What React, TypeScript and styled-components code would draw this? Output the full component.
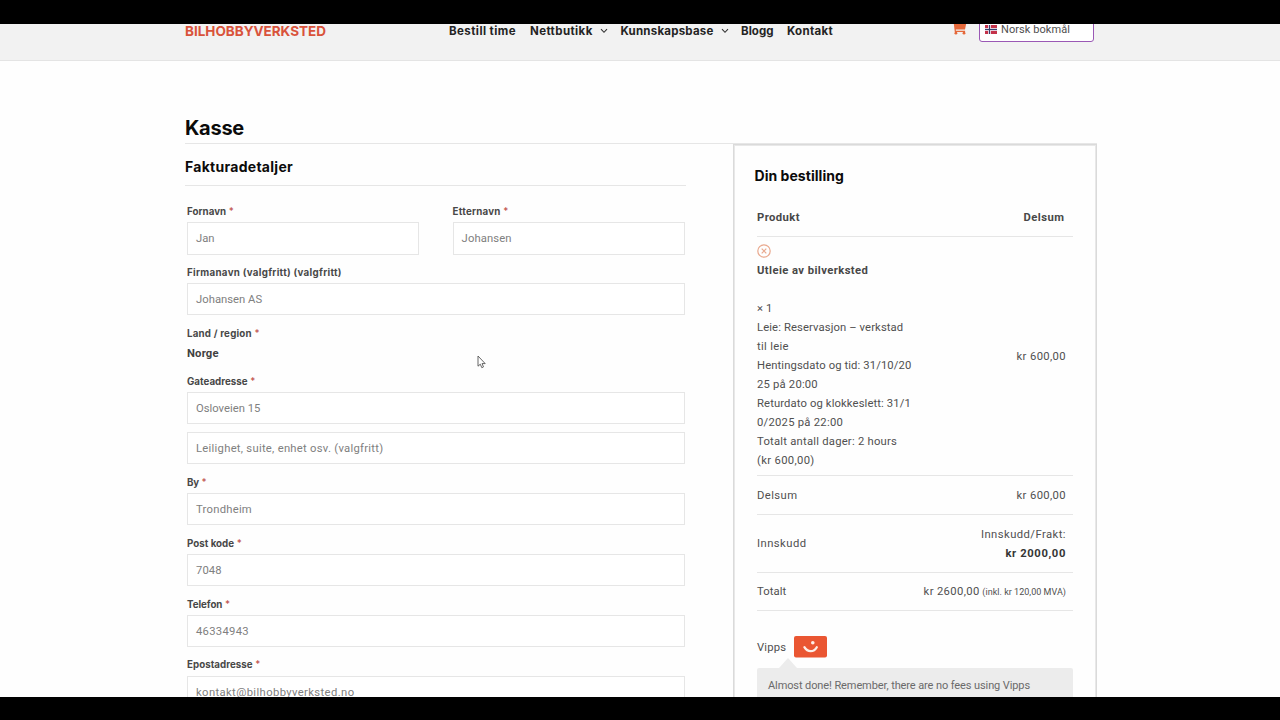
import React from "react";
import styled, { createGlobalStyle } from "styled-components";

const GlobalStyle = createGlobalStyle`
  * { box-sizing: border-box; }
  body { margin: 0; background: #000; }
`;

const body = `Roboto, "Liberation Sans", sans-serif`;
const display = `Inter, "Liberation Sans", sans-serif`;

const Frame = styled.div`
  width: 1280px;
  height: 720px;
  padding: 24px 0 23px;
  background: #000;
  overflow: hidden;
`;

const Page = styled.div`
  height: 673px;
  overflow: hidden;
  background: #fefefe;
  color: #505050;
  font: 400 11.25px/19px ${body};
`;

const Header = styled.header`
  height: 61px;
  margin-top: -24px;
  padding: 0 186px 0 185px;
  display: flex;
  align-items: center;
  background: #f2f2f2;
  border-bottom: 1px solid #e4e4e4;
`;

const Text = styled.span<{ $ls?: number }>`
  letter-spacing: ${(p) => p.$ls ?? 0.3}px;
  white-space: nowrap;
`;

const Logo = styled(Text)`
  width: 264px;
  padding-top: 1px;
  color: #d9533b;
  font-family: ${display};
  font-size: 13.5px;
  font-weight: 700;
  line-height: 12px;
`;

const Nav = styled.nav`
  flex: 1;
  display: flex;
  align-items: center;
  padding-top: 1px;
`;

const NavItem = styled.a<{ $w: number }>`
  width: ${(p) => p.$w}px;
  display: flex;
  align-items: center;
  gap: 7px;
  color: #242424;
  font-family: ${display};
  font-size: 11.5px;
  font-weight: 700;
  line-height: 14px;
`;

const Cart = styled.span`
  width: 27px;
  height: 14px;
  margin-top: -4px;
`;

const Language = styled.div`
  width: 115px;
  height: 27px;
  margin-top: -3px;
  padding: 2px 0 0 5px;
  display: flex;
  align-items: center;
  gap: 4px;
  background: #fff;
  border: 1px solid #9a58b5;
  border-radius: 3px;
  font-size: 11px;
  line-height: 12px;
`;

const Title = styled.h1`
  height: 83px;
  margin: 0 183px 0 185px;
  padding-top: 53px;
  border-bottom: 1px solid #e6e6e6;
  color: #0b0b0b;
  font: 700 20px/28px ${display};
`;

const Columns = styled.main`
  display: flex;
  align-items: flex-start;
  margin: 0 183px 0 185px;
`;

const Billing = styled.section`
  width: 501px;
  margin-right: 47px;
`;

const SectionTitle = styled.h2`
  margin: 0;
  color: #0b0b0b;
  font: 700 14px/20px ${display};
`;

const BillingTitle = styled(SectionTitle)`
  height: 42px;
  padding-top: 13px;
  border-bottom: 1px solid #e6e6e6;
`;

const Form = styled.form`
  padding: 16.2px 1px 0 2px;
`;

const Pair = styled.div`
  display: grid;
  grid-template-columns: 231.6px 232.4px;
  justify-content: space-between;
`;

const Group = styled.div<{ $gap?: number }>`
  margin-bottom: ${(p) => p.$gap ?? 8.4}px;
`;

const Label = styled.label`
  display: block;
  height: 20.2px;
  color: #484848;
  font-family: ${display};
  font-size: 9.75px;
  font-weight: 700;
  line-height: 19px;
  white-space: pre;

  i {
    color: #c0504a;
    font-style: normal;
    font-weight: 500;
  }
`;

const Box = styled.div`
  height: 32.2px;
  padding: 1px 8px 0;
  display: flex;
  align-items: center;
  background: #fff;
  border: 1px solid #e6e6e6;
  color: #808080;

  & + & { margin-top: 7.6px; }
`;

const Country = styled.div`
  height: 19.6px;
  color: #404040;
  font-weight: 700;
`;

const Order = styled.aside`
  width: 364px;
  height: 640px;
  padding: 21px 23px 0;
  border: 1px solid #dadada;
  box-shadow: inset 0 0 0 1px #e8e8e8;
`;

const OrderTitle = styled(SectionTitle)`
  margin: 0 0 13px -2.5px;
`;

const Row = styled.div<{ $h: number }>`
  height: ${(p) => p.$h}px;
  padding-right: 7px;
  display: flex;
  align-items: center;
  justify-content: space-between;
  border-bottom: 1px solid #e6e6e6;
`;

const HeadRow = styled(Row)`
  padding-right: 8.5px;
  color: #484848;
  font-weight: 700;
`;

const Lines = styled.div<{ $end?: boolean }>`
  display: flex;
  flex-direction: column;
  align-items: ${(p) => (p.$end ? "flex-end" : "flex-start")};
`;

const Strong = styled(Text)`
  color: #363636;
  font-weight: 700;
`;

const Name = styled(Strong)`
  color: #484848;
  margin-bottom: 19px;
`;

const Remove = styled.span`
  height: 19px;
  padding-bottom: 1px;
  display: flex;
  align-items: center;
`;

const Small = styled(Text)`
  font-size: 9px;
`;

const Payment = styled.div`
  height: 22px;
  margin-top: 25px;
  display: flex;
  align-items: center;
  gap: 8px;
`;

const Arrow = styled.div`
  width: 18px;
  height: 10px;
  margin-left: 22px;
  background: #ececec;
  clip-path: polygon(50% 0, 100% 100%, 0 100%);
`;

const Notice = styled.div`
  height: 60px;
  padding: 8px 11px;
  background: #ececec;
  border-radius: 2px;
  color: #6a6a6a;
  font-size: 11px;
`;

const Pointer = styled.svg`
  position: absolute;
  left: 477px;
  top: 355px;
`;

const Chevron = () => (
  <svg width="8" height="6" viewBox="0 0 8 6" fill="none" stroke="#333" strokeWidth="1.1">
    <path d="M1 1.2 4 4.3 7 1.2" />
  </svg>
);

const CartIcon = () => (
  <svg width="15" height="14" viewBox="0 0 15 14" fill="#e5683a">
    <path d="M0 0h2.6l.4 1.6h11.4L13 8.6H3.8l.1 1.2h9.2v1.1H2.8L1.6 1.1H0z" />
    <circle cx="3.9" cy="12.2" r="1.4" />
    <circle cx="12" cy="12.2" r="1.4" />
  </svg>
);

const Flag = () => (
  <svg width="12" height="9" viewBox="0 0 12 9">
    <path fill="#c4324a" d="M0 0h12v9H0z" />
    <path fill="#e0cfdc" d="M3 0h3v9H3zM0 3h12v3H0z" />
    <path fill="#33406f" d="M4 0h1v9H4zM0 4h12v1H0z" />
  </svg>
);

type FieldProps = { label: string; ls: number; required?: boolean; gap?: number; children: React.ReactNode };

const Field = ({ label, ls, required = true, gap, children }: FieldProps) => (
  <Group $gap={gap}>
    <Label>
      <Text $ls={ls}>{label}</Text>
      {required && <i> *</i>}
    </Label>
    {children}
  </Group>
);

const Input = ({ value, ls }: { value: string; ls: number }) => (
  <Box>
    <Text $ls={ls}>{value}</Text>
  </Box>
);

const nav = [
  { text: "Bestill time", ls: 0.43, w: 81 },
  { text: "Nettbutikk", ls: 0.4, w: 90.5, menu: true },
  { text: "Kunnskapsbase", ls: 0.22, w: 120.5, menu: true },
  { text: "Blogg", ls: 0.06, w: 46 },
  { text: "Kontakt", ls: 0.3, w: 60 },
];

const details = [
  { text: "× 1", ls: 0.1 },
  { text: "Leie: Reservasjon – verkstad", ls: 0.11 },
  { text: "til leie", ls: 0.3 },
  { text: "Hentingsdato og tid: 31/10/20", ls: 0.11 },
  { text: "25 på 20:00", ls: 0.2 },
  { text: "Returdato og klokkeslett: 31/1", ls: 0.12 },
  { text: "0/2025 på 22:00", ls: 0.25 },
  { text: "Totalt antall dager: 2 hours", ls: 0.23 },
  { text: "(kr 600,00)", ls: 0.33 },
];

export default function App() {
  return (
    <Frame>
      <GlobalStyle />
      <Page>
        <Header>
          <Logo $ls={-0.01}>BILHOBBYVERKSTED</Logo>
          <Nav>
            {nav.map((n) => (
              <NavItem key={n.text} $w={n.w}>
                <Text $ls={n.ls}>{n.text}</Text>
                {n.menu && <Chevron />}
              </NavItem>
            ))}
          </Nav>
          <Cart><CartIcon /></Cart>
          <Language>
            <Flag />
            <Text $ls={0.07}>Norsk bokmål</Text>
          </Language>
        </Header>
        <Title><Text $ls={-0.26}>Kasse</Text></Title>
        <Columns>
          <Billing>
            <BillingTitle><Text $ls={0.28}>Fakturadetaljer</Text></BillingTitle>
            <Form>
              <Pair>
                <Field label="Fornavn" ls={0.04}><Input value="Jan" ls={0} /></Field>
                <Field label="Etternavn" ls={0.22}><Input value="Johansen" ls={0.11} /></Field>
              </Pair>
              <Field label="Firmanavn (valgfritt) (valgfritt)" ls={0.3} required={false}>
                <Input value="Johansen AS" ls={0.02} />
              </Field>
              <Field label="Land / region" ls={0.2}>
                <Country><Text $ls={0.18}>Norge</Text></Country>
              </Field>
              <Field label="Gateadresse" ls={0.02} gap={9}>
                <Input value="Osloveien 15" ls={0} />
                <Input value="Leilighet, suite, enhet osv. (valgfritt)" ls={0.27} />
              </Field>
              <Field label="By" ls={-0.2}><Input value="Trondheim" ls={0.25} /></Field>
              <Field label="Post kode" ls={0.02}><Input value="7048" ls={0.1} /></Field>
              <Field label="Telefon" ls={-0.05}><Input value="46334943" ls={0.3} /></Field>
              <Field label="Epostadresse" ls={0.04}><Input value="kontakt@bilhobbyverksted.no" ls={0.38} /></Field>
            </Form>
          </Billing>
          <Order>
            <OrderTitle><Text $ls={0.04}>Din bestilling</Text></OrderTitle>
            <HeadRow $h={38}>
              <Text $ls={0.43}>Produkt</Text>
              <Text $ls={0.47}>Delsum</Text>
            </HeadRow>
            <Row $h={239}>
              <Lines>
                <Remove>
                  <svg width="14" height="14" viewBox="0 0 14 14" fill="none" stroke="#e9a88d">
                    <circle cx="7" cy="7" r="6.2" strokeWidth="1.2" />
                    <path d="m4.7 4.7 4.6 4.6m0-4.6L4.7 9.3" strokeWidth="1.2" />
                  </svg>
                </Remove>
                <Name $ls={0.41}>Utleie av bilverksted</Name>
                {details.map((d) => <Text key={d.text} $ls={d.ls}>{d.text}</Text>)}
              </Lines>
              <Text $ls={0.37}>kr 600,00</Text>
            </Row>
            <Row $h={39}>
              <Text $ls={0.42}>Delsum</Text>
              <Text $ls={0.37}>kr 600,00</Text>
            </Row>
            <Row $h={58}>
              <Text $ls={0.45}>Innskudd</Text>
              <Lines $end>
                <Text $ls={0.44}>Innskudd/Frakt:</Text>
                <Strong $ls={0.61}>kr 2000,00</Strong>
              </Lines>
            </Row>
            <Row $h={38}>
              <Text $ls={0.1}>Totalt</Text>
              <span>
                <Text $ls={0.35}>kr 2600,00</Text> <Small $ls={0.03}>(inkl. kr 120,00 MVA)</Small>
              </span>
            </Row>
            <Payment>
              <Text $ls={0.2}>Vipps</Text>
              <svg width="33" height="22" viewBox="0 0 33 22">
                <rect width="33" height="21.5" rx="2" fill="#ea5632" />
                <path d="M10.4 11.2c3.2 5.3 9.4 5.3 12.4 0" fill="none" stroke="#fdeee8" strokeWidth="2.3" strokeLinecap="round" />
                <circle cx="18.8" cy="6.7" r="1.8" fill="#fdeee8" />
              </svg>
            </Payment>
            <Arrow />
            <Notice><Text $ls={-0.1}>Almost done! Remember, there are no fees using Vipps</Text></Notice>
          </Order>
        </Columns>
      </Page>
      <Pointer width="9" height="14" viewBox="0 0 9 14">
        <path d="M1 1v10.2l2.3-2 1.5 3.5 1.7-.8L5 8.6h3.2Z" fill="#fff" stroke="#555" strokeWidth=".9" />
      </Pointer>
    </Frame>
  );
}
